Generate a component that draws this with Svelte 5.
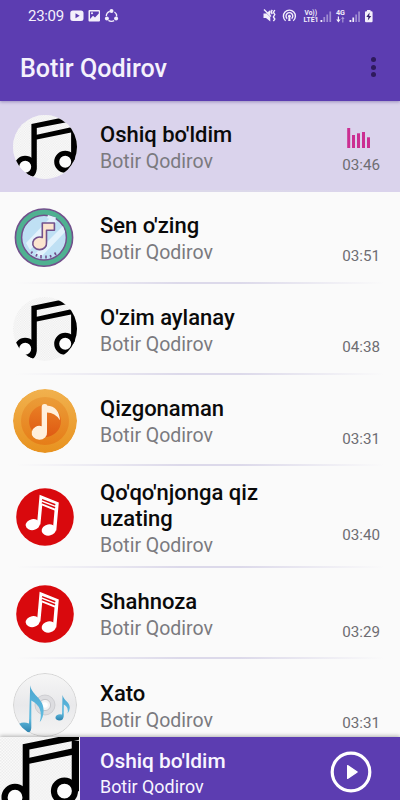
<script lang="ts">
  type Cover = 'notes' | 'teal' | 'orange' | 'red' | 'disc';

  interface Song {
    id: number;
    title: string;
    time: string;
    cover: Cover;
  }

  const artist = 'Botir Qodirov';

  const songs: Song[] = [
    { id: 1, title: "Oshiq bo'ldim", time: '03:46', cover: 'notes' },
    { id: 2, title: "Sen o'zing", time: '03:51', cover: 'teal' },
    { id: 3, title: "O'zim aylanay", time: '04:38', cover: 'notes' },
    { id: 4, title: 'Qizgonaman', time: '03:31', cover: 'orange' },
    { id: 5, title: "Qo'qo'njonga qiz uzating", time: '03:40', cover: 'red' },
    { id: 6, title: 'Shahnoza', time: '03:29', cover: 'red' },
    { id: 7, title: 'Xato', time: '03:31', cover: 'disc' }
  ];

  let currentId = $state(1);
  let current = $derived(songs.find((s) => s.id === currentId) ?? songs[0]);
</script>

{#snippet notes()}
  <rect width="64" height="64" fill="#fcfcfc" />
  <rect width="64" height="64" fill="url(#checker)" />
  <path d="M18.4 8.9 L64 -0.4 V5.2 L23.8 13.1 V19.7 L58.1 12.3 V6 H64 V47 H58.1 V17.6 L23.8 24.6 V54 Q23 60 19.5 62 L14 60 L18.4 51 Z" />
  <circle cx="12.2" cy="51.8" r="8.5" fill="#fcfcfc" stroke="#000" stroke-width="5" />
  <circle cx="52.2" cy="46.8" r="8.5" fill="#fcfcfc" stroke="#000" stroke-width="5" />
{/snippet}

{#snippet cover(kind: Cover)}
  <svg class="cover" viewBox="0 0 64 64">
    {#if kind === 'notes'}
      {@render notes()}
    {:else if kind === 'teal'}
      <circle cx="31" cy="31.6" r="28.6" fill="#4fb191" stroke="#72508c" stroke-width="1.6" />
      <circle cx="31" cy="31.6" r="22.4" fill="#bfe0f4" stroke="#72508c" stroke-width="1.5" />
      <path d="M13 37 L37 12 L44 15 L17 44 Z M22 48 L50 20 L52 26 L28 51 Z" fill="#e3f2fc" />
      <path d="M35 9 L43 11.5 L42 15 L34 12 Z" fill="#e3f2fc" />
      <path d="M18 47.5 L19.5 45.5 M23 50.5 L24 48 M28 52.5 V49 M33 52.5 V49.5 M38 51.5 L37.3 49 M43 49 L41.6 46.5" stroke="#72508c" stroke-width="1.6" />
      <path d="M29.3 17 H41.4 V24.3 H33.5 V36.5 A6.9 6.3 0 1 1 29.3 31.5 Z" fill="#fbe4cf" stroke="#72508c" stroke-width="1.6" stroke-linejoin="round" />
    {:else if kind === 'orange'}
      <circle cx="32" cy="32" r="32" fill="url(#amber)" />
      <circle cx="32" cy="32" r="24" fill="url(#amberMid)" />
      <circle cx="32" cy="32" r="16" fill="url(#amberCore)" />
      <path d="M28.7 18 Q28.7 15 31.5 15 Q34 15 34.2 16.4 Q46 17.5 47 31.3 Q42 23.6 34 23.6 V43 A7.7 7 0 1 1 28.7 37.2 Z" fill="#fff0dc" />
    {:else if kind === 'red'}
      <circle cx="32" cy="32" r="28.8" fill="#d9090d" />
      <path d="M26.6 9.8 L45.8 17.6 L43.3 45.5 H39.8 L41.5 25.6 L29.2 20.6 L27.4 39.5 H24 Z" fill="#fff" />
      <path d="M29 14.6 L42.3 19.8 M28.8 17.6 L42.1 22.8" stroke="#d9090d" stroke-width="1.5" />
      <ellipse cx="19.8" cy="39.6" rx="7.2" ry="5.5" fill="#fff" transform="rotate(-10 19.8 39.6)" />
      <ellipse cx="35.8" cy="45" rx="7.2" ry="5.6" fill="#fff" transform="rotate(-10 35.8 45)" />
    {:else}
      <circle cx="32" cy="32" r="31.5" fill="url(#silver)" stroke="#d4d4d4" />
      <circle cx="32" cy="32" r="10" fill="#dddde0" stroke="#c4c4c8" stroke-width="0.7" />
      <circle cx="32" cy="32" r="5.6" fill="#f3f3f3" stroke="#bdbdc1" stroke-width="0.8" />
      <circle cx="32" cy="32" r="2.8" fill="#fff" />
      <path d="M17.2 12.3 C19 23 31 25 30.6 38 Q30.4 45 26.8 49 Q31 34 18.3 27.5 V55 Q18 60 13.5 59.5 Q8 57.5 6 51 Q10 48.5 16 50.5 Z" fill="url(#blue)" />
      <path d="M49.5 22 C51 28 57 29 56.8 35 Q56.5 38.5 54.5 40.5 Q56 34 50.8 31.5 V42 Q51 47.5 46 47.5 Q42 46.8 42.5 44 Q44 40.5 49 41.5 Z" fill="url(#blue)" />
    {/if}
  </svg>
{/snippet}

<svg class="defs" width="0" height="0">
  <defs>
    <pattern id="checker" width="2.4" height="2.4" patternUnits="userSpaceOnUse">
      <rect width="1.2" height="1.2" fill="#ebebeb" />
      <rect x="1.2" y="1.2" width="1.2" height="1.2" fill="#ebebeb" />
    </pattern>
    <linearGradient id="amber" x2="0" y2="1"><stop stop-color="#f1b14e" /><stop offset="1" stop-color="#e8921f" /></linearGradient>
    <linearGradient id="amberMid" x2="0" y2="1"><stop stop-color="#eb9c38" /><stop offset="1" stop-color="#e67d18" /></linearGradient>
    <linearGradient id="amberCore" x2="0" y2="1"><stop stop-color="#e97f24" /><stop offset="1" stop-color="#df5a13" /></linearGradient>
    <linearGradient id="silver" x2="0" y2="1"><stop stop-color="#f6f6f6" /><stop offset="0.5" stop-color="#e9e9eb" /><stop offset="1" stop-color="#f4f4f4" /></linearGradient>
    <linearGradient id="blue" x2="0" y2="1"><stop stop-color="#4aa6d0" /><stop offset="0.7" stop-color="#62bce0" /><stop offset="1" stop-color="#2d83ae" /></linearGradient>
  </defs>
</svg>

<div class="screen">
  <header>
    <div class="status">
      <span class="clock">23:09</span>
      <svg class="left-icons" width="50" height="14" viewBox="0 0 50 14" fill="#f3effb">
        <path fill-rule="evenodd" d="M3 1.5 H11 Q13.5 1.5 13.5 4 V9.5 Q13.5 12 11 12 H3 Q0.3 12 0.3 9.5 V4 Q0.3 1.5 3 1.5 Z M5.5 4.2 V9.3 L9.7 6.8 Z" />
        <path fill-rule="evenodd" d="M19.5 1 H29 Q30 1 30 2 V11.5 Q30 12.5 29 12.5 H19.5 Q18.5 12.5 18.5 11.5 V2 Q18.5 1 19.5 1 Z M20 10 L23 6.8 L25 8.4 L28.8 4.5 V2.4 H20 Z" />
        <circle cx="22" cy="4.2" r="1" />
        <circle cx="41.5" cy="7.2" r="5.2" fill="none" stroke="#f3effb" stroke-width="1.3" stroke-dasharray="6 4.89" stroke-dashoffset="-5.2" />
        <circle cx="41.5" cy="2.1" r="2" />
        <circle cx="36.9" cy="9.6" r="2" />
        <circle cx="46.1" cy="9.6" r="2" />
      </svg>
      <svg class="right-icons" width="112" height="16" viewBox="0 0 112 16" fill="#f3effb">
        <path d="M0.5 5.5 H3 L7.3 2 V13.5 L3 10 H0.5 Z" />
        <path d="M0.5 2 L12 13" stroke="#5c3db1" stroke-width="1" />
        <path d="M1 1.6 L8 8.5 M9.3 2 L8 4 L9.3 6 M11.8 2 L10.4 4.3 L11.8 6.5 L10.4 9 L11.8 11 L10.4 13.2" fill="none" stroke="#f3effb" stroke-width="1.4" />
        <g fill="none" stroke="#f3effb" stroke-width="1.4">
          <path d="M22.6 12.8 A6 6 0 1 1 30.2 12.8" />
          <path d="M24.2 10.6 A3.4 3.4 0 1 1 28.6 10.6" />
        </g>
        <circle cx="26.4" cy="8.2" r="1.4" />
        <path d="M25.6 9 H27.2 L27.6 13 H25.2 Z" />
        <text class="tiny" x="41.5" y="7" textLength="12.5" lengthAdjust="spacingAndGlyphs">Vo))</text>
        <text class="tiny" x="40.5" y="14.4" textLength="15" lengthAdjust="spacingAndGlyphs">LTE1</text>
        <rect x="57.5" y="12" width="1.8" height="2" />
        <g opacity="0.45">
          <rect x="60.4" y="9" width="1.7" height="5" />
          <rect x="63.4" y="6.5" width="1.7" height="7.5" />
          <rect x="66.4" y="3.5" width="1.7" height="10.5" />
        </g>
        <text class="tiny" x="73" y="7" textLength="9" lengthAdjust="spacingAndGlyphs">4G</text>
        <path d="M74.8 8.5 H76 V11.5 H77.6 L75.4 14.5 L73.2 11.5 H74.8 Z" />
        <path d="M79.2 14.5 V11 H78 L79.8 8.5 L81.6 11 H80.4 V14.5 Z" opacity="0.5" />
        <rect x="86.5" y="12" width="1.8" height="2" />
        <rect x="89.4" y="9.5" width="1.7" height="4.5" />
        <g opacity="0.45">
          <rect x="92.3" y="6.5" width="1.7" height="7.5" />
          <rect x="95.2" y="3.5" width="1.7" height="10.5" />
        </g>
        <path d="M104 2 H107.5 V3.2 H108.5 Q109.6 3.2 109.6 4.4 V13 Q109.6 14.2 108.5 14.2 H103 Q102 14.2 102 13 V4.4 Q102 3.2 103 3.2 H104 Z" />
        <path d="M106.6 4.6 L103.3 9 H105.4 L104.8 12.6 L108.3 7.9 H106.2 Z" fill="#35226d" />
      </svg>
    </div>
    <div class="toolbar">
      <h1>{artist}</h1>
      <button class="menu" aria-label="Menu"><i></i><i></i><i></i></button>
    </div>
  </header>

  <main>
    {#each songs as song (song.id)}
      <!-- svelte-ignore a11y_click_events_have_key_events, a11y_no_static_element_interactions -->
      <div class="row" class:active={song.id === currentId} onclick={() => (currentId = song.id)}>
        {@render cover(song.cover)}
        <div class="info">
          <p class="title">{song.title}</p>
          <p class="artist">{artist}</p>
        </div>
        <div class="meta">
          {#if song.id === currentId}
            <svg class="bars" width="24" height="20" viewBox="0 0 24 20" fill="#cb2f92">
              <rect x="0.2" width="3" height="20" />
              <rect x="5" y="7" width="3" height="13" />
              <rect x="10" y="5.3" width="3" height="14.7" />
              <rect x="15" y="4" width="3" height="16" />
              <rect x="20" y="9.3" width="3" height="10.7" />
            </svg>
          {/if}
          <span class="time">{song.time}</span>
        </div>
      </div>
    {/each}
  </main>

  <footer>
    <svg class="now-cover" viewBox="0 3 64 51" preserveAspectRatio="xMidYMin slice">
      {@render notes()}
    </svg>
    <div class="now-info">
      <p class="now-title">{current.title}</p>
      <p class="now-artist">{artist}</p>
    </div>
    <button class="play" aria-label="Play">
      <svg width="42" height="42" viewBox="0 0 42 42">
        <circle cx="21" cy="21" r="18.8" fill="none" stroke="#fff" stroke-width="3.2" />
        <path d="M17.6 14.6 L27.2 21 L17.6 27.4 Z" fill="#fff" stroke="#fff" stroke-width="1.2" stroke-linejoin="round" />
      </svg>
    </button>
  </footer>
</div>

<style>
  :global(body) {
    margin: 0;
    background: #fafafa;
  }

  h1, p {
    margin: 0;
  }

  button {
    border: none;
    background: none;
    padding: 0;
  }

  .defs {
    position: absolute;
  }

  .screen {
    width: 400px;
    height: 800px;
    display: flex;
    flex-direction: column;
    overflow: hidden;
    background: #fafafa;
    font-family: Roboto, sans-serif;
  }

  header {
    flex: none;
    height: 101px;
    background: #5c3db1;
    color: #f5f1fc;
    box-shadow: 0 1px 3px rgba(60, 40, 120, 0.4);
    z-index: 1;
  }

  .status {
    height: 32px;
    display: flex;
    align-items: center;
    padding: 0 25px 0 28px;
    box-sizing: border-box;
  }

  .clock {
    font-size: 15px;
    width: 42px;
    letter-spacing: -0.3px;
  }

  .right-icons {
    margin-left: auto;
  }

  .tiny {
    font-size: 8px;
    font-weight: 700;
  }

  .toolbar {
    height: 70px;
    display: flex;
    align-items: center;
    justify-content: space-between;
    padding: 0 24px 0 20px;
  }

  h1 {
    font-size: 25.1px;
    font-weight: 500;
    line-height: 70px;
    padding-top: 3px;
  }

  .menu {
    display: flex;
    flex-direction: column;
    gap: 2.6px;
  }

  .menu i {
    width: 5px;
    height: 5px;
    border-radius: 50%;
    background: #2e1a5c;
  }

  main {
    flex: 1;
    min-height: 0;
    overflow: hidden;
  }

  .row {
    box-sizing: border-box;
    min-height: 91.3px;
    display: flex;
    align-items: center;
    padding: 9.5px 20px 9.5px 13px;
    background: linear-gradient(90deg, transparent 4%, #dcd9ea 45%, #dcd9ea 60%, transparent 96%) bottom / 100% 2px no-repeat;
  }

  .row.active {
    background-color: #dad3ec;
  }

  .cover {
    flex: none;
    width: 64px;
    height: 64px;
    border-radius: 50%;
  }

  .info {
    flex: 1;
    margin-left: 23px;
    padding: 4px 25px 0 0;
  }

  .title {
    font-size: 22px;
    font-weight: 500;
    line-height: 26px;
    color: #0a0a0a;
  }

  .artist {
    font-size: 19.5px;
    line-height: 27px;
    color: #7b7a7f;
  }

  .meta {
    height: 56px;
    display: flex;
    flex-direction: column;
    justify-content: flex-end;
    align-items: flex-end;
  }

  .bars {
    margin: 0 9px 7px 0;
  }

  .time {
    font-size: 15.2px;
    line-height: 20px;
    color: #6e6d72;
  }

  footer {
    flex: none;
    height: 63px;
    display: flex;
    align-items: center;
    background: #5c3db1;
    box-shadow: 0 -1px 4px rgba(0, 0, 0, 0.3);
    color: #f8f5ff;
    z-index: 1;
  }

  .now-cover {
    flex: none;
    width: 79px;
    height: 63px;
    border-right: 1px solid #f4f4f4;
  }

  .now-info {
    flex: 1;
    margin-left: 20px;
    padding-top: 9px;
  }

  .now-title {
    font-size: 20.9px;
    font-weight: 500;
    line-height: 26px;
  }

  .now-artist {
    font-size: 17.9px;
    line-height: 25px;
  }

  .play {
    margin: 7px 28px 0 0;
    height: 42px;
  }
</style>
